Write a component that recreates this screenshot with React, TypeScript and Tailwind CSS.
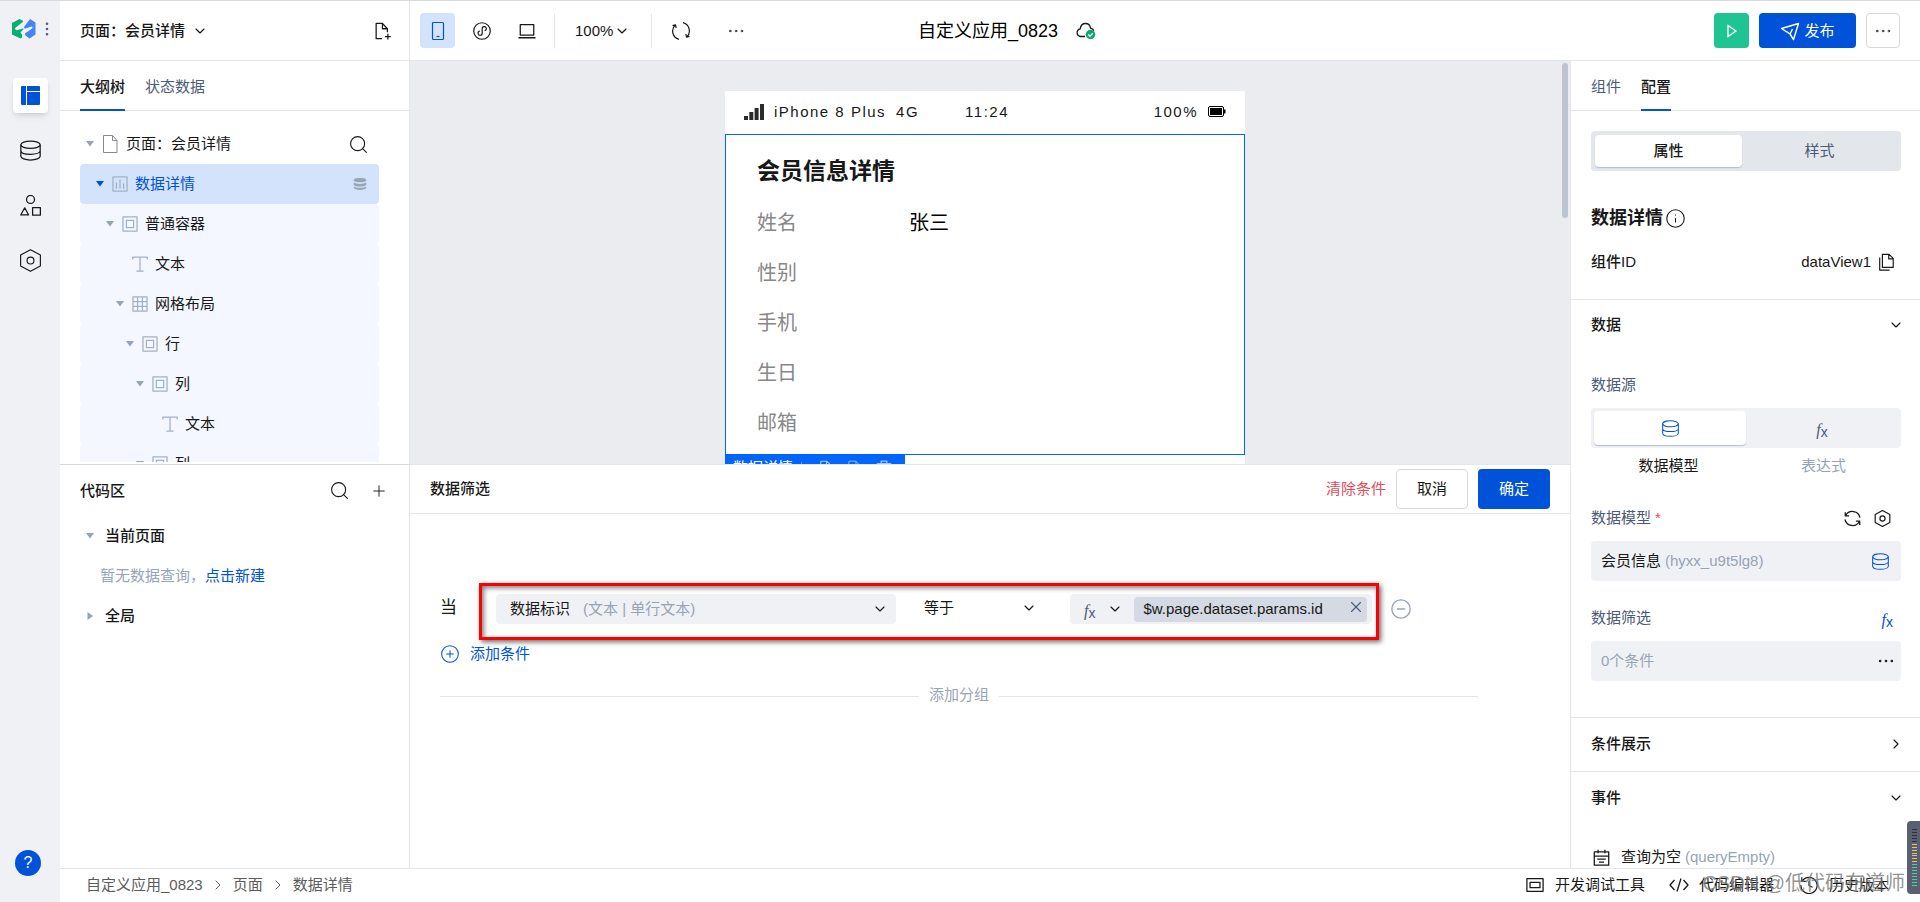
import React from 'react';
import {
  ChevronDown,
  ChevronRight,
  CircleMinus,
  CirclePlus,
  Ellipsis,
  EllipsisVertical,
  Info,
  Plus,
  Search,
  X,
} from 'lucide-react';

type IconProps = { className?: string; size?: number };

const Svg: React.FC<IconProps & { children: React.ReactNode; stroke?: number }> = ({
  className,
  size = 20,
  stroke = 1,
  children,
}) => (
  <svg
    className={`shrink-0 ${className ?? ''}`}
    width={size}
    height={size}
    viewBox="0 0 20 20"
    fill="none"
    stroke="currentColor"
    strokeWidth={stroke}
    strokeLinejoin="round"
    aria-hidden="true"
  >
    {children}
  </svg>
);

const LogoIcon = () => (
  <svg width="24" height="20" viewBox="0 0 24 20" aria-hidden="true">
    <path d="M0 4 7.500 0 11 1.800v1L3.200 9c-.5 1.500.8 2.600 2.800 2l5-1.500c.6 0 .6.800 0 1.300L8.500 13.500 10 15.500v3L8.500 19.500 0 15.500z" fill="#07b072" />
    <path d="M12.500 7.200 18 0l5.500 3.500v12L17.500 19.500 13 16v-1.500l7-5c1-1 .6-2-.5-2L13.500 9.500c-1.200.2-1.800-1-1-2.300z" fill="#4285f4" />
  </svg>
);

const DatabaseIcon: React.FC<IconProps> = (props) => (
  <Svg stroke={1.2} {...props}>
    <ellipse cx="10" cy="4.5" rx="9.2" ry="3.5" />
    <path d="M.8 4.5v11c0 2 4 3.6 9.2 3.6s9.2-1.600 9.200-3.600v-11M.8 10.200c0 2 4 3.400 9.200 3.400s9.200-1.400 9.200-3.400" />
  </Svg>
);

const LayersIcon: React.FC<IconProps> = (props) => (
  <Svg {...props}>
    <path
      d="M1 4.500C1 2.500 5 1.500 10 1.500s9 1 9 3-4 3-9 3-9-1-9-3zM1 8c4 2.500 14 2.500 18 0v3c-2 3.500-16 3.500-18 0zM1 13.500c4 2.500 14 2.500 18 0v2c-2 4-16 4-18 0z"
      fill="currentColor"
      stroke="none"
    />
  </Svg>
);

const ShapesIcon: React.FC<IconProps> = (props) => (
  <Svg stroke={1.2} {...props}>
    <circle cx="10" cy="4.200" r="3.800" />
    <path d="M4.500 12.200 8.200 19H.7zM12 12h7.400v7.200H12z" />
  </Svg>
);

const HexIcon: React.FC<IconProps & { stroke?: number }> = (props) => (
  <Svg {...props}>
    <path d="m10 .6 8.600 4.700v9.400L10 19.400l-8.600-4.700V5.300z" />
    <circle cx="10" cy="10" r="3" />
  </Svg>
);

const PageIcon: React.FC<IconProps> = (props) => (
  <Svg {...props}>
    <path d="M3.500 1.500h9l4.500 5v12H3.500zM12.500 1.500v5H17" />
  </Svg>
);

const AddPageIcon: React.FC<IconProps> = (props) => (
  <Svg stroke={1.400} {...props}>
    <path d="M10 18.500H3.500v-17h7l5.500 6v4M10.500 1.500v6H16M16.500 13v6.500M13.200 16.200h6.500" />
  </Svg>
);

const CopyIcon: React.FC<IconProps> = (props) => (
  <Svg stroke={1.300} {...props}>
    <path d="M6 1.500h7.500L18 6v10H6zM13 1.500V6.500h5M3 5v14h11" />
  </Svg>
);

const BoxIcon: React.FC<IconProps> = (props) => (
  <Svg stroke={1.600} {...props}>
    <path d="M1.200 1.200h17.600v17.600H1.200zM5.500 5.500h9v9h-9z" />
  </Svg>
);

const GridIcon: React.FC<IconProps> = (props) => (
  <Svg stroke={1.600} {...props}>
    <path d="M1.200 1.200h17.600v17.600H1.200zM7 1v18M13 1v18M1 7h18M1 13h18" />
  </Svg>
);

const ChartIcon: React.FC<IconProps> = (props) => (
  <Svg stroke={1.600} {...props}>
    <path d="M1.200 1.200h17.600v17.600H1.200zM5.500 8v8M10 4.500V16M14.500 9v7" />
  </Svg>
);

const LetterIcon: React.FC<IconProps> = (props) => (
  <Svg stroke={1.600} {...props}>
    <path d="M1 4.500V1.500h18v3M10 1.500v17.500M5.500 19h9" />
  </Svg>
);

const SyncIcon: React.FC<IconProps> = (props) => (
  <Svg stroke={1.500} {...props}>
    <path d="M2 6.500A9 9 0 0 1 18.800 9M18 13.500A9 9 0 0 1 1.200 11M1.500 2.500v4.500H6M18.500 17.500V13H14" />
  </Svg>
);

const RefreshIcon: React.FC<IconProps> = (props) => (
  <Svg stroke={1.200} {...props}>
    <path d="M8 18.300A8.500 8.500 0 0 1 4.200 4M12 1.700A8.500 8.500 0 0 1 15.800 16M1.500 4.500l3-.700.600 3.200M18.500 15.500l-3 .700-.600-3.200" />
  </Svg>
);

const FxIcon = ({ className = '' }: { className?: string }) => (
  <span className={`inline-flex items-end pt-1 leading-4 ${className}`} aria-label="表达式">
    <i className="font-['Liberation_Serif',serif] text-base leading-4">f</i>
    <span className="text-sm leading-3">x</span>
  </span>
);

const Caret = ({ className = '', right = false }: { className?: string; right?: boolean }) => (
  <svg className={`shrink-0 ${className}`} width="8" height="8" viewBox="0 0 8 8" fill="currentColor" aria-hidden="true">
    {right ? <path d="M1.500 0 7 4 1.500 8z" /> : <path d="M0 1h8L4 6.500z" />}
  </svg>
);

const tree = [
  { depth: 1, label: '数据详情', icon: ChartIcon, open: true, active: true },
  { depth: 2, label: '普通容器', icon: BoxIcon, open: true },
  { depth: 3, label: '文本', icon: LetterIcon },
  { depth: 3, label: '网格布局', icon: GridIcon, open: true },
  { depth: 4, label: '行', icon: BoxIcon, open: true },
  { depth: 5, label: '列', icon: BoxIcon, open: true },
  { depth: 6, label: '文本', icon: LetterIcon },
  { depth: 5, label: '列', icon: BoxIcon, open: true },
];

const fields = [
  { label: '姓名', value: '张三' },
  { label: '性别', value: '' },
  { label: '手机', value: '' },
  { label: '生日', value: '' },
  { label: '邮箱', value: '' },
];

const Rail: React.FC = () => (
  <nav className="flex w-[60px] shrink-0 flex-col bg-[#f0f1f5]" aria-label="主导航">
    <div className="flex h-14 items-center justify-between pl-3 pr-1">
      <LogoIcon />
      <button aria-label="菜单" className="text-[#4b5b76]">
        <EllipsisVertical size={18} strokeWidth={1.5} />
      </button>
    </div>
    <div className="mt-[21px] flex flex-col items-center gap-5">
      <button aria-label="页面设计" className="flex size-[35px] items-center justify-center rounded bg-white text-[#0052d9] shadow-md">
        <svg width="19" height="19" viewBox="0 0 19 19" fill="currentColor" aria-hidden="true">
          <path d="M1 0h4v19H1a1 1 0 0 1-1-1V1a1 1 0 0 1 1-1zM6 0h12a1 1 0 0 1 1 1v4H6zM6 6h13v12a1 1 0 0 1-1 1H6z" />
        </svg>
      </button>
      <button aria-label="数据源" className="flex size-[35px] items-center justify-center">
        <DatabaseIcon size={21} />
      </button>
      <button aria-label="组件库" className="flex size-[35px] items-center justify-center">
        <ShapesIcon size={21} />
      </button>
      <button aria-label="设置" className="flex size-[35px] items-center justify-center">
        <HexIcon size={23} />
      </button>
    </div>
    <button aria-label="帮助" className="mb-[26px] ml-[15px] mt-auto size-[26px] rounded-full bg-[#0052d9] text-base text-white">
      ?
    </button>
  </nav>
);

const Header: React.FC = () => (
  <header className="flex h-[60px] shrink-0 border-b border-[#e3e6eb]">
    <div className="flex w-[350px] shrink-0 items-center border-r border-[#e3e6eb] pl-5 pr-[18px]">
      <select aria-label="页面" className="appearance-none font-medium">
        <option>页面：会员详情</option>
      </select>
      <ChevronDown size={16} strokeWidth={1.75} className="ml-[6px]" />
      <button aria-label="新建页面" className="ml-auto">
        <AddPageIcon size={18} />
      </button>
    </div>
    <div className="flex w-[508px] shrink-0 items-center pl-[10px]">
      <button aria-label="手机" className="flex size-[35px] items-center justify-center rounded bg-[#d4e3fc] text-[#0052d9]">
        <Svg size={20} stroke={1.200}>
          <rect x="4.500" y="1.500" width="11" height="17" rx="1" />
          <path d="M8.500 15.500h3" />
        </Svg>
      </button>
      <button aria-label="小程序" className="ml-[18px]">
        <Svg size={18} stroke={1.300}>
          <circle cx="10" cy="10" r="9.200" />
          <path d="M7.500 10.200a2.300 2.300 0 1 0 2.700 2.200V7.500a2.300 2.300 0 1 1 2.700 2.200" />
        </Svg>
      </button>
      <button aria-label="电脑" className="ml-[27px]">
        <Svg size={18} stroke={1.400}>
          <path d="M2.500 3h15v11.500h-15zM.5 17.500h19" />
        </Svg>
      </button>
      <div className="ml-[18px] h-[34px] w-px bg-[#e3e6eb]" />
      <select aria-label="缩放" className="ml-5 appearance-none">
        <option>100%</option>
      </select>
      <ChevronDown size={16} strokeWidth={1.75} />
      <div className="ml-[21px] h-[34px] w-px bg-[#e3e6eb]" />
      <button aria-label="刷新" className="ml-[19px]">
        <RefreshIcon size={20} />
      </button>
      <button aria-label="更多工具" className="ml-[35px]">
        <Ellipsis size={20} strokeWidth={1} />
      </button>
    </div>
    <h1 className="flex items-center text-lg text-black">自定义应用_0823</h1>
    <div className="ml-[18px] flex items-center">
      <svg width="20" height="18" viewBox="0 0 20 18" fill="none" aria-hidden="true">
        <path d="M9 14.500H4.800a3.900 3.900 0 0 1-.6-7.700C4.700 3.500 7 1.500 9.500 1.500s4.600 2 5 4.700c1.500.300 2.800 1.200 3.300 2.500" stroke="#181818" strokeWidth="1.300" />
        <circle cx="14.500" cy="12.500" r="4.700" fill="#0aa870" />
        <path d="m12.300 12.500 1.700 1.700 2.800-3" stroke="#fff" strokeWidth="1.300" />
      </svg>
    </div>
    <div className="ml-auto flex items-center gap-[10px] pr-5">
      <button aria-label="预览" className="flex size-[35px] items-center justify-center rounded bg-[#1fc493] text-white">
        <Svg size={16} stroke={1.600}>
          <path d="M5 3v14l10-7z" strokeLinejoin="miter" />
        </Svg>
      </button>
      <button className="flex h-[35px] w-[97px] items-center justify-center gap-1 rounded bg-[#0052d9] text-white">
        <Svg size={20} stroke={1.400}>
          <path d="M1.500 7.500 18.500 2.500l-5 16-3.500-5.500zM6.500 10.500l3.500 2.500 2.500-5" />
        </Svg>
        发布
      </button>
      <button aria-label="更多" className="flex h-[35px] w-[34px] items-center justify-center rounded border border-[#d5d8e2]">
        <Ellipsis size={20} strokeWidth={1} />
      </button>
    </div>
  </header>
);

const Outline: React.FC = () => (
  <aside className="flex w-[350px] shrink-0 flex-col border-r border-[#e3e6eb]">
    <section className="flex min-h-0 flex-1 flex-col border-b border-[#d5d8e2]">
      <div className="flex h-[50px] shrink-0 gap-5 border-b border-[#e3e6eb] pl-5" role="tablist">
        <button role="tab" aria-selected="true" className="-mb-px border-b-2 border-[#0052d9] pt-[3px] font-medium">
          大纲树
        </button>
        <button role="tab" aria-selected="false" className="-mb-px border-b-2 border-transparent pt-[3px] text-[#4b5b76]">
          状态数据
        </button>
      </div>
      <div className="mb-[2px] min-h-0 flex-1 overflow-hidden pl-5 pr-[30px] pt-[13px]">
        <div className="flex h-10 items-center pl-[6px] pr-[10px]">
          <Caret className="text-[#97a3b7]" />
          <PageIcon size={20} className="ml-[6px] text-[#8a8a8a]" />
          <span className="ml-[6px]">页面：会员详情</span>
          <button aria-label="搜索" className="ml-auto">
            <Search size={21} strokeWidth={1.25} />
          </button>
        </div>
        {tree.map((node, i) => (
          <div
            key={i}
            className={`flex h-10 items-center rounded pr-3 ${node.active ? 'bg-[#d4e3fc] text-[#0052d9]' : 'bg-[#f4f7ff]'}`}
            style={{ paddingLeft: 6 + node.depth * 10 }}
          >
            {node.open ? (
              <Caret className={node.active ? '' : 'text-[#97a3b7]'} />
            ) : (
              <span className="w-2" />
            )}
            <node.icon size={16} className="ml-2 text-[#a3b1c8]" />
            <span className="ml-[7px]">{node.label}</span>
            {node.active && <LayersIcon size={14} className="ml-auto text-[#97a3b7]" />}
          </div>
        ))}
      </div>
    </section>
    <section className="flex-1">
      <div className="flex h-[51px] items-center pl-5 pr-[21px]">
        <h2 className="font-medium">代码区</h2>
        <button aria-label="搜索代码" className="ml-auto">
          <Search size={21} strokeWidth={1.25} />
        </button>
        <button aria-label="新增代码" className="ml-5">
          <Plus size={18} strokeWidth={1.25} />
        </button>
      </div>
      <div className="flex h-10 items-center pl-[26px] font-medium">
        <Caret className="mr-[11px] text-[#97a3b7]" />
        当前页面
      </div>
      <div className="flex h-10 items-center pl-10 text-[#97a3b7]">
        暂无数据查询，
        <a href="#new" className="text-[#0052d9]">
          点击新建
        </a>
      </div>
      <div className="flex h-10 items-center pl-[26px] font-medium">
        <Caret right className="mr-[11px] text-[#97a3b7]" />
        全局
      </div>
    </section>
  </aside>
);

const Canvas: React.FC = () => (
  <section className="flex min-h-0 flex-1 overflow-hidden bg-[#eaecf0]">
    <div className="flex flex-1 justify-center">
      <div className="mt-[30px] w-[520px] bg-white">
        <div className="flex h-[43px] items-center px-[19px] pb-[2px] tracking-widest">
          <svg width="20" height="16" viewBox="0 0 20 16" fill="#2b2b2b" aria-hidden="true">
            <path d="M0 12h4v4H0zM5.300 8h4v8h-4zM10.600 4h4v12h-4zM16 0h4v16h-4z" />
          </svg>
          <span className="ml-[10px]">iPhone 8 Plus</span>
          <span className="ml-[10px]">4G</span>
          <span className="ml-[46px]">11:24</span>
          <span className="ml-auto">100%</span>
          <svg className="ml-[10px]" width="18" height="11" viewBox="0 0 18 11" aria-hidden="true">
            <rect x=".5" y=".5" width="15" height="10" rx="1.500" fill="none" stroke="#000" />
            <rect x="2" y="2" width="12" height="7" fill="#000" />
            <path d="M16 3.500h1.500v4H16z" fill="#000" />
          </svg>
        </div>
        <div className="border border-[#0065ff] px-[31px] pb-[6px] pt-2">
          <h2 className="flex h-[55px] items-center text-[23px] font-bold text-[#181818]">会员信息详情</h2>
          {fields.map((field) => (
            <dl key={field.label} className="flex h-[50px] items-center text-xl">
              <dt className="w-[152px] text-[#888888]">{field.label}</dt>
              <dd className="text-black">{field.value}</dd>
            </dl>
          ))}
        </div>
        <div className="flex h-[26px] w-[180px] items-center bg-[#0065ff] pl-2 text-white">
          数据详情
          <span className="ml-2 h-3 w-px bg-[#5c9cff]" />
          <div className="ml-[14px] flex gap-[14px] text-[#a6caff]">
            <CopyIcon size={16} />
            <PageIcon size={16} />
            <Svg size={16} stroke={1.600}>
              <path d="M1 4.500h18M6.500 4.500v-3h7v3M3.500 4.500v14h13v-14" />
            </Svg>
          </div>
        </div>
      </div>
    </div>
    <div className="w-[10px] px-[2px] pt-[2px]">
      <div className="h-[155px] rounded-full bg-[#bbc4d0]" />
    </div>
  </section>
);

const FilterPanel: React.FC = () => (
  <section className="flex-1 border-t border-[#e3e6eb]">
    <div className="flex h-[49px] items-center border-b border-[#e3e6eb] px-5">
      <h2 className="font-medium">数据筛选</h2>
      <button className="ml-auto text-[#e34d59]">清除条件</button>
      <button className="ml-[10px] h-10 w-[72px] rounded border border-[#d5d8e2]">取消</button>
      <button className="ml-[10px] h-10 w-[72px] rounded bg-[#0052d9] text-white">确定</button>
    </div>
    <div className="pl-[30px] pr-[92px] pt-20">
      <div className="flex h-[30px] items-center pr-[66px]">
        <span className="w-14 pb-[2px] text-[17px]">当</span>
        <div className="relative grid flex-1 grid-cols-[400fr_174fr_302fr]">
          <div className="flex h-[30px] items-center rounded bg-[#f0f1f5] pl-[14px] pr-2">
            <select id="field" aria-label="字段" className="appearance-none">
              <option>数据标识</option>
            </select>
            <label htmlFor="field" className="ml-3 text-[#97a3b7]">
              (文本 | 单行文本)
            </label>
            <ChevronDown size={16} strokeWidth={1.75} className="ml-auto" />
          </div>
          <div className="flex items-center pb-[2px] pl-7 pr-[33px]">
            <select aria-label="运算符" className="appearance-none">
              <option>等于</option>
            </select>
            <ChevronDown size={16} strokeWidth={1.75} className="ml-auto" />
          </div>
          <div className="flex h-[30px] items-center rounded bg-[#f0f1f5] pl-[14px] pr-[5px]">
            <button aria-label="取值方式" className="flex items-center gap-3">
              <FxIcon className="text-[#4b5b76]" />
              <ChevronDown size={16} strokeWidth={1.75} />
            </button>
            <div className="ml-[11px] flex h-[25px] min-w-0 flex-1 items-center rounded-sm bg-[#d4d9e3] pl-[9px] pr-[2px]">
              <input aria-label="比较值" readOnly value="$w.page.dataset.params.id" className="min-w-0 flex-1 bg-transparent outline-none" />
              <button aria-label="清空" className="pb-1 text-[#4b5b76]">
                <X size={18} strokeWidth={1.5} />
              </button>
            </div>
          </div>
          <div className="pointer-events-none absolute -bottom-4 -left-[17px] -right-[7px] -top-[11px] border-3 border-[#ff0000] shadow-[2px_2px_5px_rgba(0,0,0,0.6),inset_2px_2px_5px_rgba(0,0,0,0.5)]" />
        </div>
        <button aria-label="删除条件" className="ml-[18px] text-[#97a3b7]">
          <CircleMinus size={22} strokeWidth={1.5} />
        </button>
      </div>
      <button className="mt-5 flex h-5 items-center gap-[10px] text-[#0052d9]">
        <CirclePlus size={20} strokeWidth={1.25} />
        添加条件
      </button>
      <div className="mt-[22px] flex h-5 items-center gap-[10px] text-[#97a3b7]">
        <div className="h-px flex-1 bg-[#e3e6eb]" />
        <button className="pb-[2px]">添加分组</button>
        <div className="h-px flex-1 bg-[#e3e6eb]" />
      </div>
    </div>
  </section>
);

const ConfigPanel: React.FC = () => (
  <aside className="flex w-[350px] shrink-0 flex-col overflow-hidden border-l border-[#e3e6eb]">
    <div className="flex h-[50px] shrink-0 gap-5 border-b border-[#e3e6eb] pl-5" role="tablist">
      <button role="tab" aria-selected="false" className="-mb-px border-b-2 border-transparent pt-[3px] text-[#4b5b76]">
        组件
      </button>
      <button role="tab" aria-selected="true" className="-mb-px border-b-2 border-[#0052d9] pt-[3px] font-medium">
        配置
      </button>
    </div>
    <div className="border-b border-[#e3e6eb] pb-[27px] pl-5 pr-[19px] pt-5">
      <div className="grid h-10 grid-cols-[147fr_155fr] rounded bg-[#e3e6eb] p-1" role="tablist">
        <button role="tab" aria-selected="true" className="rounded-sm bg-white font-medium shadow-[0_1px_1px_#b4bece]">
          属性
        </button>
        <button role="tab" aria-selected="false" className="text-[#4b5b76]">
          样式
        </button>
      </div>
      <h2 className="mt-[35px] flex h-6 items-center gap-[2px] text-lg font-bold">
        数据详情
        <Info size={21} strokeWidth={1.25} />
      </h2>
      <div className="mt-[22px] flex h-5 items-center">
        <span className="font-medium">组件ID</span>
        <span className="ml-auto">dataView1</span>
        <button aria-label="复制" className="ml-[6px] mr-[6px]">
          <CopyIcon size={18} />
        </button>
      </div>
    </div>
    <div className="border-b border-[#e3e6eb] pb-9">
      <button className="flex h-[50px] w-full items-center justify-between pl-5 pr-4 font-medium">
        数据
        <ChevronDown size={16} strokeWidth={1.75} />
      </button>
      <div className="pl-5 pr-[19px] pt-[25px]">
        <h3 className="flex h-5 items-center text-[#4b5b76]">数据源</h3>
        <div className="mt-[13px] grid h-10 grid-cols-2 rounded bg-[#f0f1f5] p-[3px]" role="tablist">
          <button role="tab" aria-selected="true" aria-label="数据模型" className="flex items-center justify-center rounded-sm bg-white text-[#0052d9] shadow-[0_1px_1px_#b4bece]">
            <DatabaseIcon size={17} />
          </button>
          <button role="tab" aria-selected="false" aria-label="表达式" className="flex items-center justify-center">
            <FxIcon className="text-[#4b5b76]" />
          </button>
        </div>
        <div className="mt-2 grid grid-cols-2 text-center leading-5">
          <span>数据模型</span>
          <span className="text-[#97a3b7]">表达式</span>
        </div>
        <div className="mt-8 flex h-5 items-center pr-[10px]">
          <h3 className="text-[#4b5b76]">数据模型</h3>
          <span className="ml-1 text-[#e34d59]">*</span>
          <button aria-label="刷新模型" className="ml-auto">
            <SyncIcon size={17} />
          </button>
          <button aria-label="模型设置" className="ml-[13px]">
            <HexIcon size={17} stroke={1.400} />
          </button>
        </div>
        <button className="mt-[13px] flex h-10 w-full items-center rounded bg-[#f0f1f5] pl-[10px] pr-3">
          会员信息
          <span className="ml-1 text-[#97a3b7]">(hyxx_u9t5lg8)</span>
          <DatabaseIcon size={17} className="ml-auto text-[#0052d9]" />
        </button>
        <div className="mt-[27px] flex h-5 items-center justify-between pr-2">
          <h3 className="text-[#4b5b76]">数据筛选</h3>
          <button aria-label="使用表达式" className="flex">
            <FxIcon className="text-[#0052d9]" />
          </button>
        </div>
        <button className="mt-[13px] flex h-10 w-full items-center justify-between rounded bg-[#f0f1f5] pl-[10px] pr-[5px] text-[#97a3b7]">
          0个条件
          <Ellipsis size={20} strokeWidth={1.25} className="text-[#181818]" />
        </button>
      </div>
    </div>
    <button className="flex h-[54px] w-full shrink-0 items-center justify-between border-b border-[#e3e6eb] pb-[2px] pl-5 pr-4 font-medium">
      条件展示
      <ChevronRight size={16} strokeWidth={1.75} />
    </button>
    <div className="min-h-0 flex-1 overflow-hidden">
      <button className="flex h-[51px] w-full items-center justify-between pl-5 pr-4 font-medium">
        事件
        <ChevronDown size={16} strokeWidth={1.75} />
      </button>
      <div className="mt-[22px] flex h-6 items-center pl-[22px]">
        <Svg size={17} stroke={1.500}>
          <path d="M1.500 3.500h17v15.500h-17zM1.500 8.500h17M6 1v4M14 1v4M5 12h10M7 15.500h6" />
        </Svg>
        <span className="ml-[11px]">查询为空</span>
        <span className="ml-1 text-[#97a3b7]">(queryEmpty)</span>
      </div>
    </div>
  </aside>
);

const Footer: React.FC = () => (
  <footer className="relative flex h-[34px] shrink-0 items-center border-t border-[#e3e6eb] pb-[2px] pl-[26px] pr-[31px]">
    <nav className="flex items-center gap-[7px] text-[#5c5c5c]" aria-label="路径">
      <a href="#app">自定义应用_0823</a>
      <ChevronRight size={16} strokeWidth={1.5} />
      <a href="#page">页面</a>
      <ChevronRight size={16} strokeWidth={1.5} />
      <a href="#detail">数据详情</a>
    </nav>
    <button className="ml-auto flex items-center gap-[11px]">
      <Svg size={18} stroke={1.400}>
        <path d="M1 3h18v14H1zM4.500 7h11v6h-11z" />
      </Svg>
      开发调试工具
    </button>
    <button className="ml-6 flex items-center gap-[10px]">
      <Svg size={20} stroke={1.300}>
        <path d="M5.500 5 1 10l4.500 5M14.500 5l4.500 5-4.500 5M12 3.500l-4 13" />
      </Svg>
      代码编辑器
    </button>
    <button className="ml-[26px] flex items-center gap-[11px]">
      <Svg size={18} stroke={1.300}>
        <path d="M2.500 5.500A9 9 0 1 1 1 10M2 1.500v4.500h4.500M10 5.500v5l4 2" />
      </Svg>
      历史版本
    </button>
    <span className="pointer-events-none absolute right-[15px] top-0 text-xl leading-[28px] text-[#777777]/80">
      CSDN @低代码布道师
    </span>
    {/* volume meter docked on the window edge */}
    <div className="absolute bottom-2 right-0 flex h-[73px] w-[13px] flex-col justify-between rounded-l bg-[#5a6072] py-2 pl-[5px] pr-[3px]">
      {Array.from({ length: 20 }, (_, i) => (
        <span key={i} className={`h-px ${i < 5 ? 'bg-[#2c303c]' : i < 12 ? 'bg-[#e0c860]' : 'bg-[#4fd0a0]'}`} />
      ))}
    </div>
  </footer>
);

const App: React.FC = () => {
  return (
    <div className="flex h-screen overflow-hidden border-t border-[#d9d9dc] bg-white font-['Liberation_Sans','Noto_Sans_CJK_SC',sans-serif] text-[15px] leading-5 text-[#181818]">
      <Rail />
      <div className="flex min-w-0 flex-1 flex-col">
        <Header />
        <div className="flex min-h-0 flex-1">
          <Outline />
          <main className="flex min-w-0 flex-1 flex-col">
            <Canvas />
            <FilterPanel />
          </main>
          <ConfigPanel />
        </div>
        <Footer />
      </div>
    </div>
  );
};

export default App;
